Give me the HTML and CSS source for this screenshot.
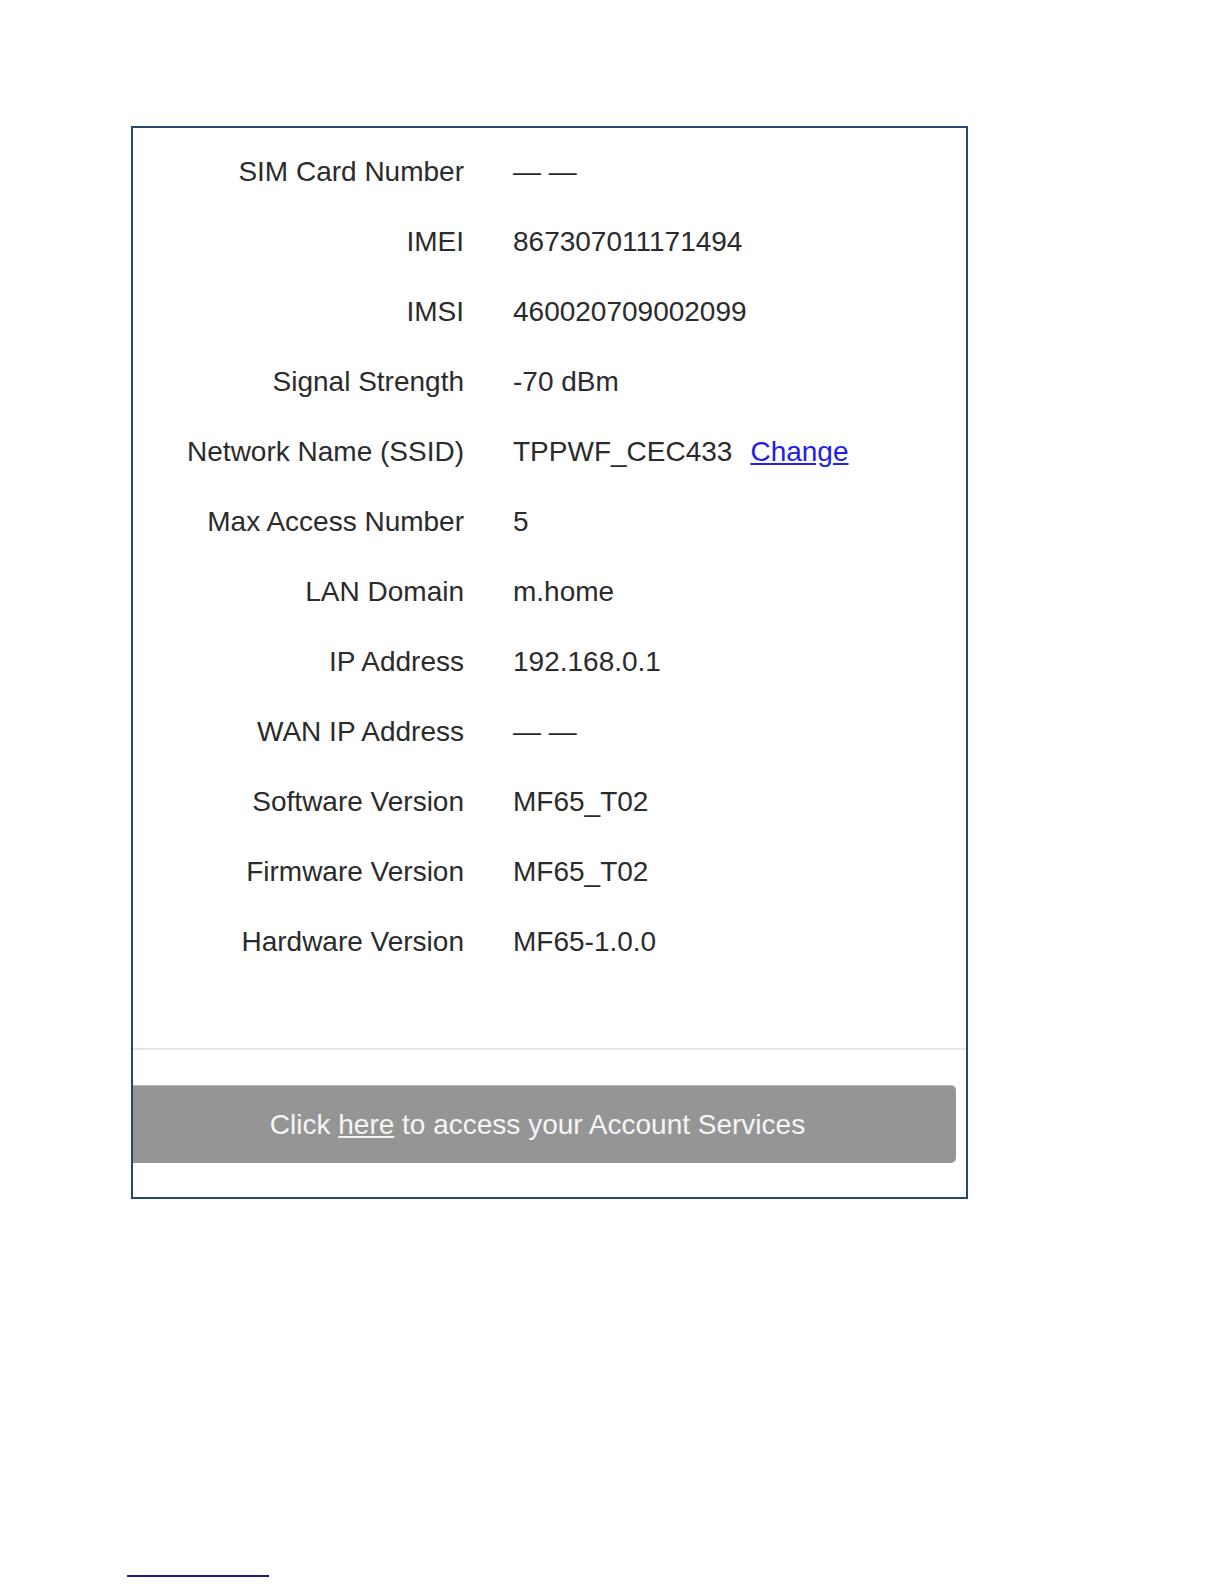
FILE: index.html
```html
<!DOCTYPE html>
<html lang="en">
<head>
  <meta charset="UTF-8">
  <title>Device Information</title>
  <link rel="stylesheet" href="styles.css">
</head>
<body>

  <!-- device info panel -->
  <div class="info-box">
    <div class="info-list">
      <div class="label">SIM Card Number</div>
      <div class="value">&mdash; &mdash;</div>

      <div class="label">IMEI</div>
      <div class="value">867307011171494</div>

      <div class="label">IMSI</div>
      <div class="value">460020709002099</div>

      <div class="label">Signal Strength</div>
      <div class="value">-70 dBm</div>

      <div class="label">Network Name (SSID)</div>
      <div class="value">TPPWF_CEC433<a href="#" class="change-link">Change</a></div>

      <div class="label">Max Access Number</div>
      <div class="value">5</div>

      <div class="label">LAN Domain</div>
      <div class="value">m.home</div>

      <div class="label">IP Address</div>
      <div class="value">192.168.0.1</div>

      <div class="label">WAN IP Address</div>
      <div class="value">&mdash; &mdash;</div>

      <div class="label">Software Version</div>
      <div class="value">MF65_T02</div>

      <div class="label">Firmware Version</div>
      <div class="value">MF65_T02</div>

      <div class="label">Hardware Version</div>
      <div class="value">MF65-1.0.0</div>
    </div>

    <hr class="divider">

    <div class="account-bar">
      Click <a href="#">here</a> to access your Account Services
    </div>
  </div>

  <div class="footnote-rule"></div>

</body>
</html>
```

FILE: styles.css
```css
body {
  margin: 0;
  padding: 126px 0 0 131px;
  background-color: #fff;
  font-family: "Liberation Sans", Arial, sans-serif;
  font-size: 28px;
  color: #2b2b2b;
}

.info-box {
  box-sizing: border-box;
  width: 837px;
  height: 1073px;
  border: 2px solid #23496e;
  padding: 9px 0 34px 0;
}

.info-list {
  display: grid;
  grid-template-columns: 331px 1fr;
  grid-auto-rows: 70px;
  line-height: 70px;
}

.label {
  text-align: right;
  white-space: nowrap;
}

.value {
  padding-left: 49px;
  white-space: nowrap;
}

.change-link {
  color: #2020e6;
  margin-left: 18px;
}

.divider {
  border: 0;
  border-top: 2px solid #e6e6e6;
  margin: 71px 0 35px 0;
}

.account-bar {
  box-sizing: border-box;
  width: 823px;
  height: 78px;
  line-height: 78px;
  background-color: #959595;
  border-top: 1px solid #b8b8b8;
  border-radius: 0 5px 5px 0;
  color: #f5f5f5;
  text-align: center;
  padding-right: 14px;
}

.account-bar a {
  color: #f5f5f5;
}

.footnote-rule {
  width: 142px;
  margin: 376px 0 0 -4px;
  border-top: 2px solid #1c1c7e;
}
```
